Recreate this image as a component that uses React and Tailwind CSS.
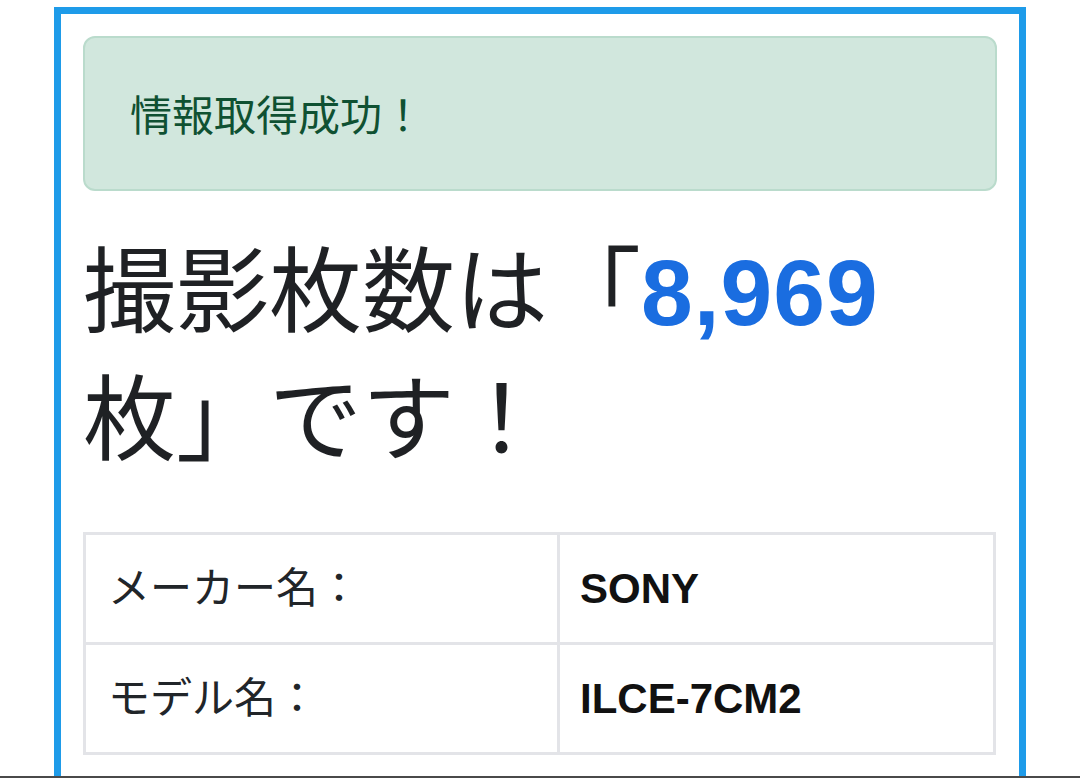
export default function App() {
  const rows = [
    { label: 'メーカー名：', value: 'SONY' },
    { label: 'モデル名：', value: 'ILCE-7CM2' },
  ];

  return (
    <div
      className="h-[778px] w-[1080px] bg-white flex flex-col overflow-hidden text-[#212529]"
      style={{ fontFamily: '"Liberation Sans", "Noto Sans CJK JP", sans-serif' }}
    >
      <div className="flex-1 min-h-0 pt-[7px]">
        <div className="ml-[54px] w-[972px] h-full border-[7px] border-b-0 border-[#1e9be9] p-[22px] pt-[22px]">
          {/* alert */}
          <div className="h-[155px] flex items-center rounded-[12px] border-2 border-[#badbcc] bg-[#d1e7dd] pl-[45px] pt-[6px] text-[42px] text-[#0f5132]">
            情報取得成功！
          </div>

          <h1 className="mt-[38px] text-[93px] leading-[128px] font-normal text-[#1f2124]">
            撮影枚数は「<span className="font-bold text-[#1a6de0] tracking-[1px]">8,969</span>枚」です！
          </h1>

          <table className="mt-[47px] w-[913px] border-collapse text-[42px]">
            <tbody>
              {rows.map((r) => (
                <tr key={r.label} className="h-[110px]">
                  <td className="w-[474px] border-[3px] border-[#e3e4e8] pl-[22px] align-middle">{r.label}</td>
                  <td className="border-[3px] border-[#e3e4e8] pl-[20px] align-middle font-bold text-[#111]">{r.value}</td>
                </tr>
              ))}
            </tbody>
          </table>
        </div>
      </div>
      <div className="h-[2px] bg-[#4a4a4a]" />
    </div>
  );
}
